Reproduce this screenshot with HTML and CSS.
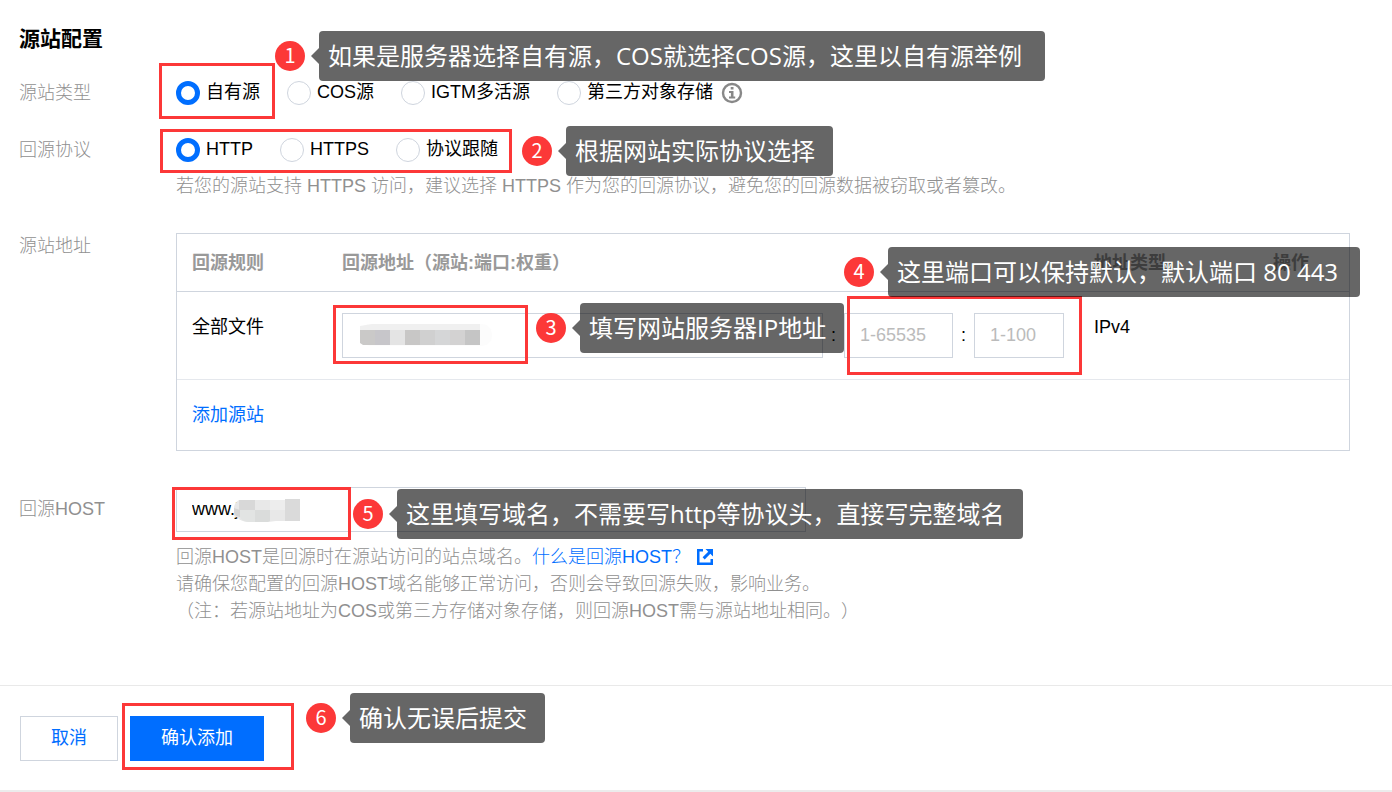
FILE: index.html
```html
<!DOCTYPE html>
<html lang="zh-CN">
<head>
<meta charset="utf-8">
<title>源站配置</title>
<link rel="stylesheet" href="styles.css">
</head>
<body>
<form class="page">
  <main class="config">
    <h1 class="title">源站配置</h1>

    <div class="field" role="radiogroup" aria-labelledby="type-label">
      <div class="label" id="type-label">源站类型</div>
      <div class="options">
        <label class="option"><input class="radio" type="radio" name="type" checked>自有源</label>
        <label class="option"><input class="radio" type="radio" name="type">COS源</label>
        <label class="option"><input class="radio" type="radio" name="type">IGTM多活源</label>
        <label class="option"><input class="radio" type="radio" name="type">第三方对象存储
          <svg class="info" viewBox="0 0 22 22" aria-hidden="true"><circle cx="11" cy="11" r="9" fill="none" stroke="#888" stroke-width="2.4"/><path d="M9.700 5h2.800v2.600H9.700zM8 9h4.500v5.600H14.200v2H8v-2h1.900V11H8z" fill="#888"/></svg>
        </label>
      </div>
    </div>

    <div class="field field-protocol" role="radiogroup" aria-labelledby="protocol-label">
      <div class="label" id="protocol-label">回源协议</div>
      <div class="control">
        <div class="options">
          <label class="option"><input class="radio" type="radio" name="protocol" checked>HTTP</label>
          <label class="option"><input class="radio" type="radio" name="protocol">HTTPS</label>
          <label class="option"><input class="radio" type="radio" name="protocol">协议跟随</label>
        </div>
        <p class="hint">若您的源站支持 HTTPS 访问，建议选择 HTTPS 作为您的回源协议，避免您的回源数据被窃取或者篡改。</p>
      </div>
    </div>

    <div class="field field-address">
      <div class="label">源站地址</div>
      <div class="control address">
        <table class="origins">
          <colgroup><col class="col-rule"><col><col class="col-kind"><col class="col-action"></colgroup>
          <thead>
            <tr><th>回源规则</th><th>回源地址（源站:端口:权重）</th><th>地址类型</th><th>操作</th></tr>
          </thead>
          <tbody>
            <tr>
              <td>全部文件</td>
              <td class="cell-endpoint">
                <div class="endpoint">
                  <input class="input input-ip" type="text" aria-label="源站">
                  <span class="colon">:</span>
                  <input class="input input-port" type="text" placeholder="1-65535" aria-label="端口">
                  <span class="colon">:</span>
                  <input class="input input-weight" type="text" placeholder="1-100" aria-label="权重">
                </div>
              </td>
              <td>IPv4</td>
              <td></td>
            </tr>
          </tbody>
        </table>
        <div class="add"><a class="link" href="#">添加源站</a></div>
      </div>
    </div>

    <div class="field field-host">
      <label class="label label-host" for="host">回源HOST</label>
      <div class="control">
        <input class="input input-host" id="host" type="text" value="www.j">
        <p class="hint hint-host">回源HOST是回源时在源站访问的站点域名。<a class="link" href="#">什么是回源HOST？<svg class="external" viewBox="0 0 16 16" aria-hidden="true"><path d="M6 0H0v16h16v-6h-2.500v3.500h-11v-11H6zM8.500 0H16v7.500l-2.700-2.700-5.600 5.600-2.100-2.100 5.600-5.600z" fill="#006eff"/></svg></a><br>请确保您配置的回源HOST域名能够正常访问，否则会导致回源失败，影响业务。<br>（注：若源站地址为COS或第三方存储对象存储，则回源HOST需与源站地址相同。）</p>
      </div>
    </div>
  </main>

  <footer class="actions">
    <button class="button" type="button">取消</button>
    <button class="button button-primary" type="button">确认添加</button>
  </footer>
</form>

<div class="notes">
  <svg class="mosaic mosaic-ip" viewBox="0 0 134 24" aria-hidden="true">
    <rect x="0" y="0" width="132" height="22" rx="10" fill="#fcfcfc"/>
    <path d="M0 2l12-2h108v6H0z" fill="#f0f0f0"/>
    <path d="M0 6h15v15H3l-3-2z" fill="#cac9c8"/><path d="M15 6h15v15H15z" fill="#c7c6ca"/><path d="M30 6h15v15H30z" fill="#e4e4e4"/><path d="M45 6h15v15H45z" fill="#c8c7c6"/><path d="M60 6h15v15H60z" fill="#d0d0d0"/><path d="M75 6h15v15H75z" fill="#d5d6d7"/><path d="M90 6h15v15H90z" fill="#d3d2d2"/><path d="M105 6h15v15h-15z" fill="#c5c5c5"/>
  </svg>
  <svg class="mosaic mosaic-host" viewBox="0 0 66 24" aria-hidden="true">
    <path d="M5 1h61v21H42l-8 1H14q-8-1-10-4l-4-2V8q1-5 5-7z" fill="#e8e8e8"/>
    <path d="M5 1h16v10H5z" fill="#d8d8d8"/><path d="M0 9l6 2v7l-4-1-2-3z" fill="#d5d5d5"/><path d="M6 11h15v12h-7q-7-1-8-5z" fill="#e2e4e3"/><path d="M21 11h15v11l-2 1H21z" fill="#dadcdb"/><path d="M36 1h15v10H36z" fill="#ededed"/><path d="M51 0h15v22H51z" fill="#dadada"/>
  </svg>

  <div class="frame frame-type"></div>
  <div class="frame frame-protocol"></div>
  <div class="frame frame-ip"></div>
  <div class="frame frame-port"></div>
  <div class="frame frame-host"></div>
  <div class="frame frame-submit"></div>

  <div class="note note-type"><span class="badge">1</span><span class="tip">如果是服务器选择自有源，COS就选择COS源，这里以自有源举例</span></div>
  <div class="note note-protocol"><span class="badge">2</span><span class="tip">根据网站实际协议选择</span></div>
  <div class="note note-ip"><span class="badge">3</span><span class="tip">填写网站服务器IP地址</span></div>
  <div class="note note-port"><span class="badge">4</span><span class="tip">这里端口可以保持默认，默认端口 80 443</span></div>
  <div class="note note-host"><span class="badge">5</span><span class="tip">这里填写域名，不需要写http等协议头，直接写完整域名</span></div>
  <div class="note note-submit"><span class="badge">6</span><span class="tip">确认无误后提交</span></div>
</div>
</body>
</html>
```

FILE: styles.css
```css
* { box-sizing: border-box; }

body {
  position: relative;
  margin: 0;
  background: #fff;
  color: #000;
  font: 18px/27px "Liberation Sans", "Noto Sans CJK SC", sans-serif;
  text-spacing-trim: space-all;
}

.config { padding: 24px 42px 60px 19px; }
.title { margin: 0 0 25px; font-size: 21px; line-height: 30px; }

.field { display: flex; align-items: flex-start; }
.field-protocol { margin-top: 29px; }
.field-address { margin-top: 32px; }
.field-host { margin-top: 36px; }
.label { flex: 0 0 157px; padding-top: 1px; color: #909090; font-weight: 300; }
.label-host { padding-top: 9px; }
.control { flex: 1; min-width: 0; }

.options { display: flex; gap: 27px; }
.option { display: flex; align-items: center; gap: 6px; white-space: nowrap; }
.radio {
  appearance: none;
  width: 24px;
  height: 24px;
  margin: 0;
  border: 1px solid #cfd5de;
  border-radius: 50%;
  background: #fff;
}
.radio:checked { border: 5px solid #006eff; }
.info { width: 22px; height: 22px; margin-left: 2px; }

.hint { margin: 10px 0 0; color: #909090; font-weight: 300; }
.hint-host { margin-top: 12px; }
.link { color: #006eff; text-decoration: none; }
.external { width: 16px; height: 16px; margin-left: 7px; vertical-align: -2px; }

.address { margin-top: 1px; border: 1px solid #cfd5de; }
.origins { width: 100%; border-collapse: separate; border-spacing: 0; table-layout: fixed; }
.col-rule { width: 150px; }
.col-kind { width: 179px; }
.col-action { width: 91px; }
.origins th { padding: 16px 15px 14px; border-bottom: 1px solid #cfd5de; color: #999; text-align: left; }
.origins td { padding: 22px 15px 21px; border-bottom: 1px solid #e5e8ed; vertical-align: top; }
.origins .cell-endpoint { padding-top: 21px; }
.add { padding: 22px 15px 21px; }

.endpoint { display: flex; align-items: center; }
.colon { flex: 0 0 21px; text-align: center; }
.input {
  height: 45px;
  padding: 0 15px;
  border: 1px solid #cfd5de;
  border-radius: 0;
  background: #fff;
  color: #000;
  font: inherit;
}
.input::placeholder { color: #bbb; opacity: 1; }
.input-ip { flex: 1; min-width: 0; }
.input-port { width: 109px; }
.input-weight { width: 90px; }
.input-host { display: block; width: 630px; max-width: 100%; }

.actions {
  display: flex;
  gap: 12px;
  padding: 30px 20px 29px;
  border-top: 1px solid #e9e9e9;
  border-bottom: 2px solid #ececec;
}
.button {
  height: 45px;
  padding: 0 30px;
  border: 1px solid #cfd5de;
  background: #fff;
  color: #006eff;
  font: inherit;
}
.button-primary { border-color: #006eff; background: #006eff; color: #fff; }

/* Step annotations drawn over the form */
.notes { position: absolute; inset: 0; pointer-events: none; }
.mosaic, .frame, .note { position: absolute; }
.mosaic-ip { left: 360px; top: 324px; width: 134px; height: 24px; }
.mosaic-host { left: 234px; top: 499px; width: 66px; height: 24px; }

.frame { border: 3px solid #fc3838; }
.frame-type { left: 159px; top: 63px; width: 116px; height: 56px; }
.frame-protocol { left: 160px; top: 129px; width: 352px; height: 44px; }
.frame-ip { left: 333px; top: 305px; width: 195px; height: 59px; }
.frame-port { left: 847px; top: 296px; width: 235px; height: 79px; }
.frame-host { left: 172px; top: 487px; width: 179px; height: 53px; }
.frame-submit { left: 122px; top: 703px; width: 172px; height: 67px; }

.note { display: flex; align-items: center; gap: 14px; white-space: nowrap; }
.note-type { left: 275px; top: 31px; min-width: 770px; }
.note-protocol { left: 522px; top: 126px; }
.note-ip { left: 536px; top: 303px; }
.note-port { left: 844px; top: 247px; min-width: 516px; }
.note-host { left: 353px; top: 489px; }
.note-submit { left: 306px; top: 693px; }

.badge {
  flex: none;
  width: 30px;
  height: 30px;
  border-radius: 50%;
  background: #fc3838;
  color: #fff;
  font: 20px/28px "Noto Sans CJK SC", sans-serif;
  text-align: center;
}
.tip {
  position: relative;
  flex: 1;
  padding: 0 18px 0 9px;
  border-radius: 4px;
  background: rgba(0, 0, 0, .6);
  color: #fff;
  font: 24px/50px "Open Sans", "Noto Sans CJK SC", sans-serif;
}
.tip::before {
  content: "";
  position: absolute;
  right: 100%;
  top: 17px;
  border: 8px solid transparent;
  border-right-color: rgba(0, 0, 0, .6);
  border-left-width: 0;
}
```
